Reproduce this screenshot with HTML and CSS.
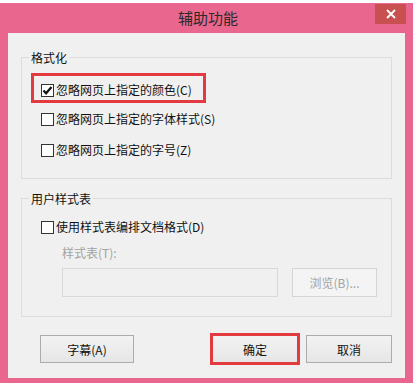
FILE: index.html
```html
<!DOCTYPE html>
<html lang="zh-CN">

<head>
    <meta charset="UTF-8">
    <meta name="viewport" content="width=device-width, initial-scale=1">
    <title>辅助功能</title>
    <link rel="stylesheet" href="styles.css">
</head>

<body>
    <div class="window">
        <div class="titlebar">
            <span class="title">辅助功能</span>
            <div class="close">
                <svg width="10" height="10" viewBox="0 0 10 10">
                    <path d="M1 1L9 9M9 1L1 9" />
                </svg>
            </div>
        </div>

        <div class="client">
            <div class="group group-format">
                <div class="legend">格式化</div>
                <div class="mark">
                    <label class="check">
                        <span class="box">
                            <svg width="13" height="13" viewBox="0 0 13 13">
                                <path class="tick" d="M2.5 6.5l2.6 2.8L10.5 3" />
                            </svg>
                        </span>忽略网页上指定的颜色(C)
                    </label>
                </div>
                <label class="check row-style"><span class="box"></span>忽略网页上指定的字体样式(S)</label>
                <label class="check row-size"><span class="box"></span>忽略网页上指定的字号(Z)</label>
            </div>

            <div class="group group-user">
                <div class="legend">用户样式表</div>
                <label class="check row-use"><span class="box"></span>使用样式表编排文档格式(D)</label>
                <div class="field-label">样式表(T):</div>
                <div class="field-row">
                    <div class="input"></div>
                    <div class="btn btn-browse">浏览(B)...</div>
                </div>
            </div>

            <div class="actions">
                <div class="btn btn-caption">字幕(A)</div>
                <div class="btn btn-ok">确定</div>
                <div class="btn btn-cancel">取消</div>
            </div>
        </div>
    </div>
</body>

</html>
```

FILE: styles.css
```css
/* Page */
body {
    margin: 0;
    background: #fff;
    font-family: "Noto Sans CJK SC", "Microsoft YaHei", sans-serif;
    font-size: 12px;
    color: #111;
}

/* Window frame */
.window {
    margin-top: 3px;
    width: 413px;
    box-sizing: border-box;
    background: #e9668f;
    padding: 0 8px 5px 8px;
}

.titlebar {
    position: relative;
    height: 30px;
    display: flex;
    align-items: center;
    justify-content: center;
}

.title {
    font-size: 15px;
    line-height: 20px;
    color: #2a2a2a;
    margin-left: 3px;
}

.close {
    position: absolute;
    top: 1px;
    right: -1px;
    width: 31px;
    height: 20px;
    background: #c85050;
    display: flex;
    align-items: center;
    justify-content: center;
}

.close path {
    stroke: #fff;
    stroke-width: 1.8;
    fill: none;
}

/* Client area */
.client {
    background: #f0f0f0;
    padding: 24px 13px 15px 13px;
}

.group {
    border: 1px solid #dcdcdc;
    padding: 0 0 19px 9px;
    display: flex;
    flex-direction: column;
    align-items: flex-start;
}

.group-user {
    margin-top: 19px;
}

.legend {
    margin: -8px 0 0 -2px;
    padding: 0 2px;
    line-height: 16px;
    background: #f0f0f0;
    color: #111;
}

/* Checkboxes */
.check {
    display: flex;
    align-items: center;
    height: 18px;
    line-height: 18px;
    margin-left: 10px;
    white-space: nowrap;
}

.box {
    width: 13px;
    height: 13px;
    box-sizing: border-box;
    border: 1px solid #333;
    background: #fff;
    margin-right: 2px;
    position: relative;
}

.box svg {
    position: absolute;
    left: -1px;
    top: -1px;
}

.tick {
    fill: none;
    stroke: #111;
    stroke-width: 2.2;
}

/* Red annotation round the first option */
.mark {
    margin-top: 7px;
    border: 3px solid #e23a3f;
    padding: 5px 11px 1px 0;
    box-sizing: border-box;
    height: 30px;
}

.mark .check {
    margin-left: 7px;
}

.row-style {
    margin-top: 7px;
}

.row-size {
    margin-top: 13px;
}

.row-use {
    margin-top: 11px;
}

.field-label {
    margin: 9px 0 0 31px;
    line-height: 16px;
    color: #a3a3a3;
}

.field-row {
    display: flex;
    margin: 7px 0 0 31px;
    gap: 14px;
}

.input {
    width: 216px;
    height: 29px;
    box-sizing: border-box;
    border: 1px solid #d9d9d9;
    background: #f0f0f0;
}

/* Buttons */
.btn {
    height: 28px;
    box-sizing: border-box;
    border: 1px solid #acacac;
    background: linear-gradient(#f2f2f2, #e6e6e6);
    display: flex;
    align-items: center;
    justify-content: center;
    color: #111;
}

.btn-browse {
    width: 85px;
    height: 29px;
    border-color: #d5d5d5;
    background: #f4f4f4;
    color: #a3a3a3;
}

.actions {
    display: flex;
    margin-top: 18px;
    gap: 8px;
}

.btn-caption {
    width: 94px;
    margin-left: 19px;
}

.btn-ok {
    width: 86px;
    margin-left: auto;
    border-color: #4a7fc9;
    outline: 3px solid #e23a3f;
    outline-offset: -1px;
}

.btn-cancel {
    width: 86px;
}
```
